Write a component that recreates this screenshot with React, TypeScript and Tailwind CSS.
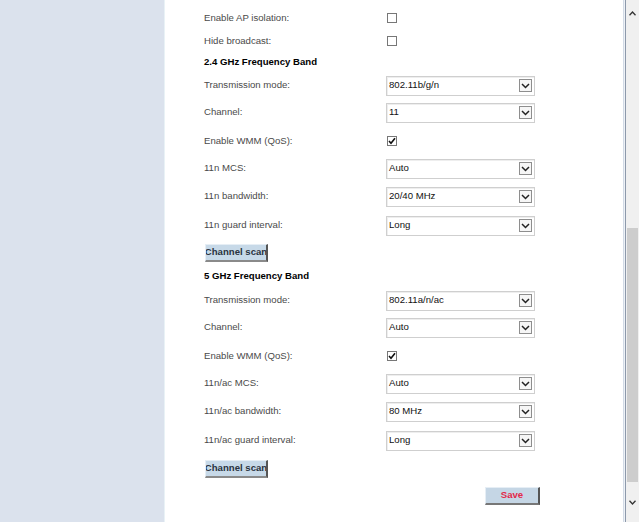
import React from "react";

const Chevron = () => (
  <svg width="9" height="6" viewBox="0 0 9 6" fill="none">
    <path d="M1 1 L4.5 4.5 L8 1" stroke="#222" strokeWidth="1.5" />
  </svg>
);

const Select = ({ value }: { value: string }) => (
  <div className="w-[149px] h-[20px] border border-[#cfcfcf] bg-white flex items-center justify-between pl-[2px] pr-[2px] shadow-[inset_1px_1px_0_#eee]">
    <span className="text-[9.6px] text-[#111]">{value}</span>
    <div className="w-[13px] h-[13px] border border-[#8e8e8e] bg-[#f6f6f6] flex items-center justify-center">
      <Chevron />
    </div>
  </div>
);

const Check = ({ checked }: { checked?: boolean }) => (
  <div className="ml-[1px] w-[10px] h-[10px] border border-[#777] bg-white flex items-center justify-center">
    {checked && (
      <svg width="8" height="8" viewBox="0 0 8 8" fill="none">
        <path d="M1 4 L3 6.3 L7 1.2" stroke="#111" strokeWidth="1.6" />
      </svg>
    )}
  </div>
);

const Row = ({ h, label, children }: { h: string; label: string; children?: React.ReactNode }) => (
  <div className={`flex items-center ${h}`}>
    <div className="w-[182px] text-[9.6px] text-[#4a4a4a] whitespace-nowrap">{label}</div>
    {children}
  </div>
);

const Heading = ({ h, text }: { h: string; text: string }) => (
  <div className={`flex items-center ${h} text-[9.6px] font-bold text-black`}>{text}</div>
);

const ScanBtn = () => (
  <div className="w-[63px] h-[18px] bg-[#c7d9e8] border-t border-l border-[#e6eef5] border-r-2 border-b-2 border-r-[#555] border-b-[#8a8a8a] flex items-center justify-center text-[9.6px] font-bold text-[#2a3340] whitespace-nowrap overflow-hidden">
    Channel scan
  </div>
);

export default function App() {
  return (
    <div
      className="flex w-[640px] h-[522px] overflow-hidden bg-white"
      style={{ fontFamily: '"Liberation Sans", Arial, sans-serif' }}
    >
      <div className="w-[164px] bg-[#dbe2ed] shrink-0" />
      <div className="w-[1px] bg-[#e9f2f6] shrink-0" />
      <div className="w-[458px] shrink-0 pl-[39px] pt-[6px] flex flex-col">
        <Row h="h-[24px]" label="Enable AP isolation:"><Check /></Row>
        <Row h="h-[22px]" label="Hide broadcast:"><Check /></Row>
        <Heading h="h-[21px]" text="2.4 GHz Frequency Band" />
        <Row h="h-[25px]" label="Transmission mode:"><Select value="802.11b/g/n" /></Row>
        <Row h="h-[29px]" label="Channel:"><Select value="11" /></Row>
        <Row h="h-[28px]" label="Enable WMM (QoS):"><Check checked /></Row>
        <Row h="h-[27px]" label="11n MCS:"><Select value="Auto" /></Row>
        <Row h="h-[29px]" label="11n bandwidth:"><Select value="20/40 MHz" /></Row>
        <Row h="h-[29px]" label="11n guard interval:"><Select value="Long" /></Row>
        <div className="h-[25px] flex items-center pl-[1px]"><ScanBtn /></div>
        <Heading h="h-[23px]" text="5 GHz Frequency Band" />
        <Row h="h-[25px]" label="Transmission mode:"><Select value="802.11a/n/ac" /></Row>
        <Row h="h-[29px]" label="Channel:"><Select value="Auto" /></Row>
        <Row h="h-[28px]" label="Enable WMM (QoS):"><Check checked /></Row>
        <Row h="h-[27px]" label="11n/ac MCS:"><Select value="Auto" /></Row>
        <Row h="h-[29px]" label="11n/ac bandwidth:"><Select value="80 MHz" /></Row>
        <Row h="h-[29px]" label="11n/ac guard interval:"><Select value="Long" /></Row>
        <div className="h-[27px] flex items-center pl-[1px]"><ScanBtn /></div>
        <div className="h-[27px] flex items-center pl-[281px]">
          <div className="w-[55px] h-[18px] bg-[#c5d6e5] border-t border-l border-[#e6eef5] border-r-2 border-b-2 border-r-[#555] border-b-[#777] flex items-center justify-center text-[9.6px] font-bold text-[#e3284a]">
            Save
          </div>
        </div>
      </div>
      <div className="w-[1px] bg-[#d3dbe6] shrink-0" />
      <div className="w-[1px] bg-[#eef2f7] shrink-0" />
      <div className="w-[1px] bg-[#8d99ab] shrink-0" />
      <div className="w-[13px] bg-[#f0f0f0] shrink-0 flex flex-col">
        <div className="h-[27px] flex items-start justify-center pt-[11px]">
          <svg width="7" height="5" viewBox="0 0 7 5" fill="none">
            <path d="M0.5 4.2 L3.5 1 L6.5 4.2" stroke="#333" strokeWidth="1.3" />
          </svg>
        </div>
        <div className="h-[201px]" />
        <div className="h-[254px] mx-[1px] bg-[#cdcdcd]" />
        <div className="flex-1 flex items-center justify-center">
          <svg width="7" height="5" viewBox="0 0 7 5" fill="none">
            <path d="M0.5 0.8 L3.5 4 L6.5 0.8" stroke="#333" strokeWidth="1.3" />
          </svg>
        </div>
      </div>
    </div>
  );
}
